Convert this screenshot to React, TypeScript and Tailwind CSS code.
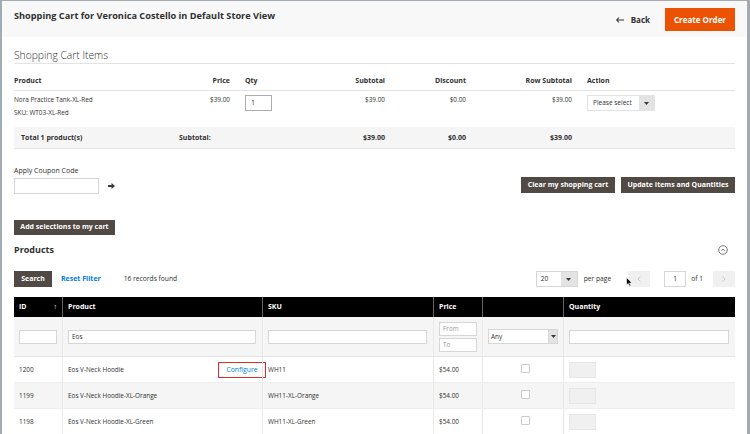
import React from "react";

const Caret = ({ color = "#41362f" }: { color?: string }) => (
  <svg width="5" height="3" viewBox="0 0 5 3">
    <path d="M0 0h5L2.5 3z" fill={color} />
  </svg>
);

const cartCols = {
  product: "w-[146px]",
  price: "w-[70px] text-right",
  qty: "w-[70px] pl-[15px]",
  subtotal: "w-[85px] text-right",
  discount: "w-[81px] text-right",
  rowSubtotal: "w-[106px] text-right",
  action: "w-[163px] pl-[15px]",
};

function CartTable() {
  return (
    <div className="text-[7px] leading-[10px]">
      <div className="flex h-[27px] pt-[12px] border-b border-[#e3e3e3] font-bold">
        <div className={cartCols.product}>Product</div>
        <div className={cartCols.price}>Price</div>
        <div className={cartCols.qty}>Qty</div>
        <div className={cartCols.subtotal}>Subtotal</div>
        <div className={cartCols.discount}>Discount</div>
        <div className={cartCols.rowSubtotal}>Row Subtotal</div>
        <div className={cartCols.action}>Action</div>
      </div>
      <div className="flex h-[36px] pt-[4px] text-[6.4px]">
        <div className={cartCols.product}>
          <div>Nora Practice Tank-XL-Red</div>
          <div className="mt-[3px]">SKU: WT03-XL-Red</div>
        </div>
        <div className={cartCols.price}>$39.00</div>
        <div className={cartCols.qty}>
          <div className="w-[27px] h-[16px] border border-[#adadad] bg-white pl-[5px] flex items-center text-[7px]">1</div>
        </div>
        <div className={cartCols.subtotal}>$39.00</div>
        <div className={cartCols.discount}>$0.00</div>
        <div className={cartCols.rowSubtotal}>$39.00</div>
        <div className={cartCols.action}>
          <div className="flex w-[68px] h-[16px] border border-[#e3e3e3] bg-white">
            <div className="flex-1 flex items-center pl-[5px] text-[6.5px] whitespace-nowrap">Please select</div>
            <div className="w-[15px] bg-[#e3e3e3] flex items-center justify-center">
              <Caret />
            </div>
          </div>
        </div>
      </div>
      <div className="flex h-[22px] items-center bg-[#f5f5f5] border-b border-[#e3e3e3] font-bold">
        <div className="w-[165px] pl-[7px]">Total 1 product(s)</div>
        <div className="w-[121px]">Subtotal:</div>
        <div className={cartCols.subtotal}>$39.00</div>
        <div className={cartCols.discount}>$0.00</div>
        <div className={cartCols.rowSubtotal}>$39.00</div>
      </div>
    </div>
  );
}

const gridCols = "grid grid-cols-[48px_200px_171px_49px_81px_172px]";

const rows = [
  { id: "1200", name: "Eos V-Neck Hoodie", sku: "WH11", configure: true },
  { id: "1199", name: "Eos V-Neck Hoodie-XL-Orange", sku: "WH11-XL-Orange" },
  { id: "1198", name: "Eos V-Neck Hoodie-XL-Green", sku: "WH11-XL-Green" },
];

function ProductsGrid() {
  const cell = "pl-[5px] flex items-center border-l border-[#e8e8e8]";
  return (
    <div className="text-[7px] leading-[10px]">
      <div className={`${gridCols} h-[20px] bg-black text-white font-bold`}>
        <div className="pl-[5px] flex items-center justify-between pr-[5px]">
          <span>ID</span>
          <span className="text-[7px] font-normal">↑</span>
        </div>
        <div className="pl-[5px] flex items-center border-l border-[#666]">Product</div>
        <div className="pl-[5px] flex items-center border-l border-[#666]">SKU</div>
        <div className="pl-[5px] flex items-center border-l border-[#666]">Price</div>
        <div className="border-l border-[#666]" />
        <div className="pl-[5px] flex items-center border-l border-[#666]">Quantity</div>
      </div>
      <div className={`${gridCols} h-[40px] bg-[#f5f5f5] border-b border-[#e3e3e3]`}>
        <div className="px-[5px] flex items-center">
          <div className="w-full h-[14px] bg-white border border-[#d6d6d6]" />
        </div>
        <div className={`${cell} pr-[6px]`}>
          <div className="w-full h-[14px] bg-white border border-[#d6d6d6] flex items-center pl-[3px] text-[6.4px]">Eos</div>
        </div>
        <div className={`${cell} pr-[6px]`}>
          <div className="w-full h-[14px] bg-white border border-[#d6d6d6]" />
        </div>
        <div className={`${cell} flex-col justify-center items-start gap-[2px] pr-[5px]`}>
          <div className="w-[38px] h-[14px] bg-white border border-[#d6d6d6] flex items-center pl-[3px] text-[6.4px] text-[#999]">From</div>
          <div className="w-[38px] h-[14px] bg-white border border-[#d6d6d6] flex items-center pl-[3px] text-[6.4px] text-[#999]">To</div>
        </div>
        <div className={`${cell} pr-[5px]`}>
          <div className="w-full h-[15px] bg-white border border-[#d6d6d6] flex">
            <div className="flex-1 flex items-center pl-[2px] text-[6.4px]">Any</div>
            <div className="w-[9px] bg-[#e3e3e3] flex items-center justify-center border-l border-[#d6d6d6]">
              <Caret />
            </div>
          </div>
        </div>
        <div className={`${cell} pr-[6px]`}>
          <div className="w-full h-[14px] bg-white border border-[#d6d6d6]" />
        </div>
      </div>
      {rows.map((r, i) => (
        <div
          key={r.id}
          className={`${gridCols} h-[26px] border-b border-[#eeeeee] text-[6.4px] ${i === 1 ? "bg-[#f5f5f5]" : "bg-white"}`}
        >
          <div className="pl-[5px] flex items-center">{r.id}</div>
          <div className={`${cell} justify-between`}>
            <span>{r.name}</span>
            {r.configure && (
              <div className="-mr-[4px] w-[48px] h-[16px] border-[1.5px] border-[#e02b27] bg-white flex items-center justify-center text-[#007bdb] text-[6.8px]">
                Configure
              </div>
            )}
          </div>
          <div className={cell}>{r.sku}</div>
          <div className={cell}>$54.00</div>
          <div className={`${cell} justify-center pl-0 pb-[2px]`}>
            <div className="w-[9px] h-[9px] bg-white border border-[#cccccc] rounded-[1px]" />
          </div>
          <div className={cell}>
            <div className="w-[27px] h-[16px] bg-[#f0f0f0] border border-[#e6e6e6]" />
          </div>
        </div>
      ))}
    </div>
  );
}

export default function App() {
  return (
    <div className="relative w-[750px] h-[434px] overflow-hidden bg-white border-l-2 border-t border-r-[3px] border-[#a3abb2] font-['Open_Sans',sans-serif] text-[#303030]">
      {/* page header */}
      <div className="flex justify-between h-[36px] bg-[#f8f8f8] px-[12px]">
        <h1 className="pt-[9px] text-[9.2px] leading-[12px] font-bold text-[#303030]">
          Shopping Cart for Veronica Costello in Default Store View
        </h1>
        <div className="flex items-start pt-[7px]">
          <div className="flex items-center gap-[7px] h-[23px] font-bold text-[8px] mr-[15px]">
            <svg width="8" height="6" viewBox="0 0 8 6">
              <path d="M3 0.5L0.7 3L3 5.5M0.7 3H8" stroke="#303030" strokeWidth="1.1" fill="none" />
            </svg>
            <span>Back</span>
          </div>
          <button className="h-[23px] w-[70px] bg-[#eb5202] text-white font-bold text-[8px]">Create Order</button>
        </div>
      </div>

      <div className="px-[12px]">
        <div className="mt-[11px] pb-[1px] border-b border-[#e3e3e3]">
          <h2 className="text-[10.3px] leading-[14px] font-light">Shopping Cart Items</h2>
        </div>

        <CartTable />

        <div className="flex justify-between items-end mt-[17px]">
          <div>
            <div className="text-[7px] leading-[10px]">Apply Coupon Code</div>
            <div className="flex items-center mt-[2px] gap-[9px]">
              <div className="w-[85px] h-[16px] bg-white border border-[#d6d6d6]" />
              <svg width="7" height="6" viewBox="0 0 7 6">
                <path d="M0 2h3.5V0L7 3L3.5 6V4H0z" fill="#41362f" />
              </svg>
            </div>
          </div>
          <div className="flex gap-[6px] mb-[1px]">
            <button className="h-[16px] w-[94px] bg-[#514943] text-white font-bold text-[7px]">Clear my shopping cart</button>
            <button className="h-[16px] w-[114px] bg-[#514943] text-white font-bold text-[7px]">Update Items and Quantities</button>
          </div>
        </div>

        <button className="mt-[26px] h-[15px] w-[101px] bg-[#514943] text-white font-bold text-[7px] block">
          Add selections to my cart
        </button>

        <div className="flex justify-between items-center mt-[9px] h-[12px]">
          <h3 className="text-[9px] leading-[12px] font-bold">Products</h3>
          <svg width="10" height="10" viewBox="0 0 10 10" className="mr-[7px]">
            <circle cx="5" cy="5" r="4.3" stroke="#555" strokeWidth="0.8" fill="none" />
            <path d="M3.2 5.8L5 4L6.8 5.8" stroke="#555" strokeWidth="0.8" fill="none" />
          </svg>
        </div>

        <div className="flex items-center mt-[15px] h-[16px] text-[6.7px]">
          <button className="h-[16px] w-[38px] bg-[#514943] text-white font-bold text-[7px]">Search</button>
          <span className="ml-[9px] text-[#007bdb] font-bold text-[7px]">Reset Filter</span>
          <span className="ml-[23px]">16 records found</span>
          <div className="ml-auto flex items-center h-[16px]">
            <div className="flex w-[42px] h-[16px] border border-[#d6d6d6] bg-white">
              <div className="flex-1 flex items-center pl-[4px]">20</div>
              <div className="w-[16px] bg-[#e3e3e3] flex items-center justify-center">
                <Caret />
              </div>
            </div>
            <span className="ml-[6px]">per page</span>
            <div className="ml-[17px] w-[22px] h-[16px] bg-[#f0f0f0] flex items-center justify-center">
              <svg width="4" height="6" viewBox="0 0 4 6">
                <path d="M3.5 0.5L1 3L3.5 5.5" stroke="#c2c2c2" strokeWidth="0.8" fill="none" />
              </svg>
            </div>
            <div className="ml-[14px] w-[22px] h-[16px] border border-[#d6d6d6] bg-white flex items-center justify-center">1</div>
            <span className="ml-[5px]">of 1</span>
            <div className="ml-[10px] w-[22px] h-[16px] bg-[#f0f0f0] flex items-center justify-center">
              <svg width="4" height="6" viewBox="0 0 4 6">
                <path d="M0.5 0.5L3 3L0.5 5.5" stroke="#c2c2c2" strokeWidth="0.8" fill="none" />
              </svg>
            </div>
          </div>
        </div>

        <div className="mt-[10px]">
          <ProductsGrid />
        </div>
      </div>

      {/* mouse cursor */}
      <svg width="7" height="10" viewBox="0 0 7 10" className="absolute left-[624px] top-[276px]">
        <path d="M0.5 0.5V8L2.3 6.4L3.6 9.3L4.8 8.8L3.5 6H6z" fill="#000" stroke="#fff" strokeWidth="0.6" />
      </svg>
    </div>
  );
}
